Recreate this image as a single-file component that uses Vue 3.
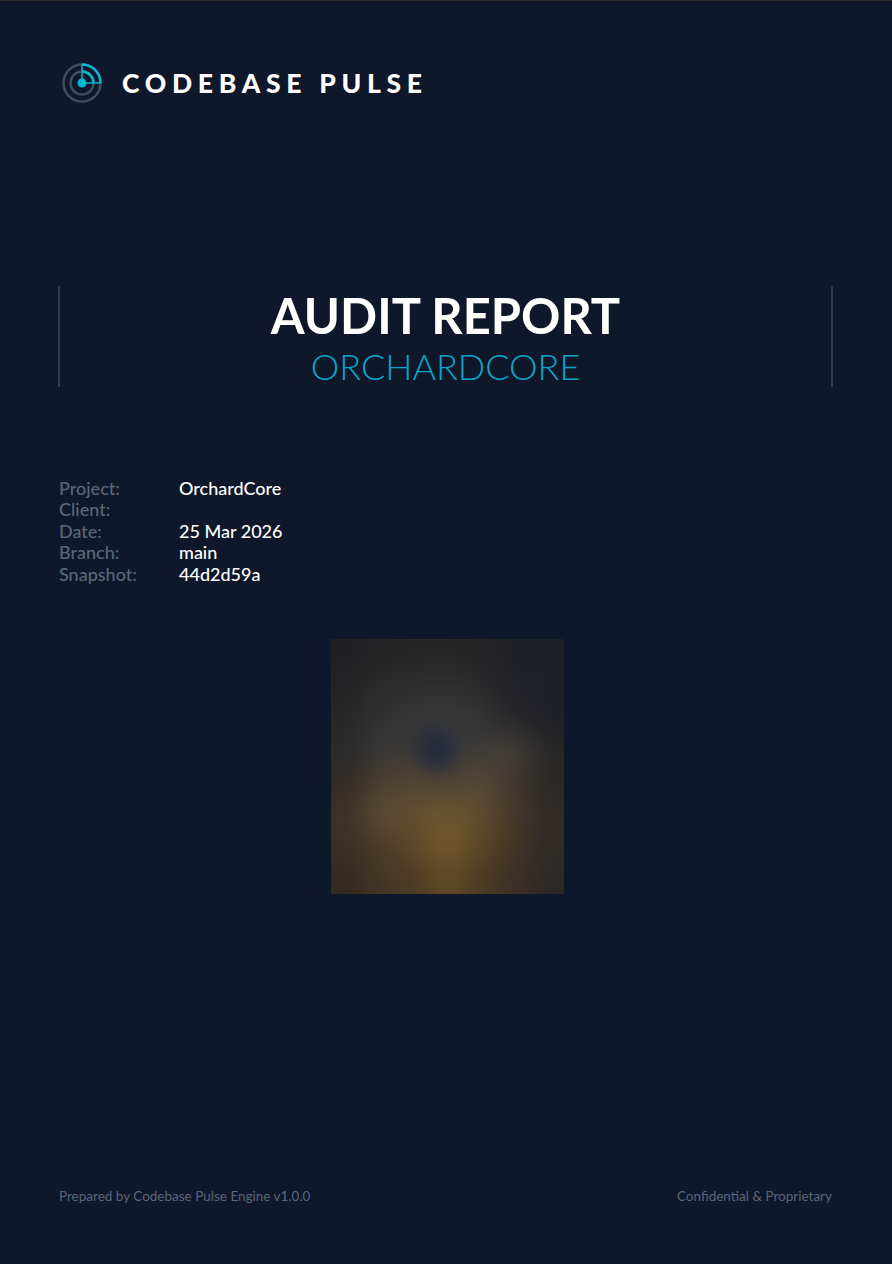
<script setup>
const meta = [
  { label: 'Project:', value: 'OrchardCore' },
  { label: 'Client:', value: '' },
  { label: 'Date:', value: '25 Mar 2026' },
  { label: 'Branch:', value: 'main' },
  { label: 'Snapshot:', value: '44d2d59a' },
]

// rough colour samples of the blurred cover picture
const samples = [
  ['#202023', '#242426', '#262626', '#272626', '#242426', '#1f2025', '#1f2027'],
  ['#242426', '#2c2c2c', '#2e2e2e', '#303030', '#2b2b2c', '#212228', '#1e2028'],
  ['#272729', '#313131', '#373737', '#393939', '#343434', '#27272a', '#1f2026'],
  ['#2a2a2a', '#383838', '#3a3a3a', '#3c3c3c', '#3e3c3a', '#443e38', '#282828'],
  ['#322c28', '#4a3f30', '#524532', '#4a4234', '#544836', '#403830', '#2a2826'],
  ['#3c3227', '#5c4c33', '#624f30', '#70562f', '#604d30', '#46382a', '#302b27'],
  ['#3a3025', '#4b3c28', '#5c4829', '#78592a', '#5a4627', '#423526', '#302b27'],
  ['#322a23', '#453624', '#4b3a23', '#624a24', '#4c3a22', '#3c3026', '#2c2927'],
]

// repeat the edges so the blur doesn't fade out at the picture's border
const padded = samples.map((r) => [r[0], ...r, r[r.length - 1]])
const cells = [padded[0], ...padded, padded[padded.length - 1]].flat()
</script>

<template>
  <div class="cover">
    <header class="brand">
      <svg class="brand-icon" width="42" height="42" viewBox="0 0 42 42" fill="none">
        <circle cx="21" cy="21" r="18.5" stroke="#3f4d5e" stroke-width="2.5" />
        <circle cx="21" cy="21" r="11.5" stroke="#3f4d5e" stroke-width="2.5" />
        <path d="M21 21V2.5M21 21H39.5" stroke="#06b6d4" stroke-width="1.5" />
        <path d="M21 2.5A18.5 18.5 0 0 1 39.5 21" stroke="#06b6d4" stroke-width="2.5" />
        <path d="M21 9.5A11.5 11.5 0 0 1 32.5 21" stroke="#06b6d4" stroke-width="2.5" />
        <circle cx="21" cy="21" r="4.5" fill="#06b6d4" />
      </svg>
      <span class="brand-name">CODEBASE PULSE</span>
    </header>

    <section class="title-block">
      <h1>AUDIT REPORT</h1>
      <h2>ORCHARDCORE</h2>
    </section>

    <dl class="meta">
      <div v-for="row in meta" :key="row.label" class="meta-row">
        <dt>{{ row.label }}</dt>
        <dd>{{ row.value }}</dd>
      </div>
    </dl>

    <div class="picture">
      <div class="picture-blur">
        <span v-for="(c, i) in cells" :key="i" :style="{ background: c }"></span>
      </div>
      <div class="picture-spot"></div>
    </div>

    <footer class="footer">
      <span>Prepared by Codebase Pulse Engine v1.0.0</span>
      <span>Confidential &amp; Proprietary</span>
    </footer>
  </div>
</template>

<style scoped>
.cover {
  box-sizing: border-box;
  height: 1264px;
  padding: 60px 59px 0 58px;
  display: flex;
  flex-direction: column;
  background: #0f172a;
  border-top: 1px solid #2a2a2a;
  font-family: Lato, "Liberation Sans", sans-serif;
  overflow: hidden;
}

.brand {
  display: flex;
  align-items: center;
  gap: 19.5px;
  height: 44px;
  padding-left: 2.5px;
}

.brand-name {
  color: #fff;
  font-size: 26.5px;
  font-weight: 900;
  letter-spacing: 5.7px;
  white-space: nowrap;
}

.title-block {
  margin-top: 181px;
  height: 101px;
  display: flex;
  flex-direction: column;
  align-items: center;
  border-left: 2px solid #2c3b4f;
  border-right: 2px solid #2c3b4f;
}

h1 {
  margin: 0;
  color: #fff;
  font-size: 48.8px;
  font-weight: 700;
  line-height: 59px;
}

h2 {
  margin: 0;
  color: #08a6c8;
  font-size: 36px;
  font-weight: 300;
  line-height: 42px;
}

.meta {
  margin: 90.8px 0 0 1px;
  font-size: 18px;
  font-weight: 500;
}

.meta-row {
  display: flex;
  height: 21.5px;
  line-height: 21.5px;
}

dt {
  width: 120px;
  color: #5a6779;
}

dd {
  margin: 0;
  color: #fff;
}

.picture {
  position: relative;
  width: 233px;
  height: 255px;
  margin: 53.7px 0 0 273px;
  overflow: hidden;
}

.picture-blur {
  position: absolute;
  inset: -32px -33.3px;
  display: grid;
  grid-template-columns: repeat(9, 1fr);
  grid-template-rows: repeat(10, 1fr);
  filter: blur(14px);
}

.picture-spot {
  position: absolute;
  left: 86px;
  top: 90px;
  width: 38px;
  height: 40px;
  border-radius: 50%;
  background: #252a3c;
  filter: blur(9px);
}

.footer {
  margin: auto 1px 60px;
  display: flex;
  justify-content: space-between;
  color: #5a6779;
  font-size: 13.5px;
  line-height: 16px;
}
</style>
